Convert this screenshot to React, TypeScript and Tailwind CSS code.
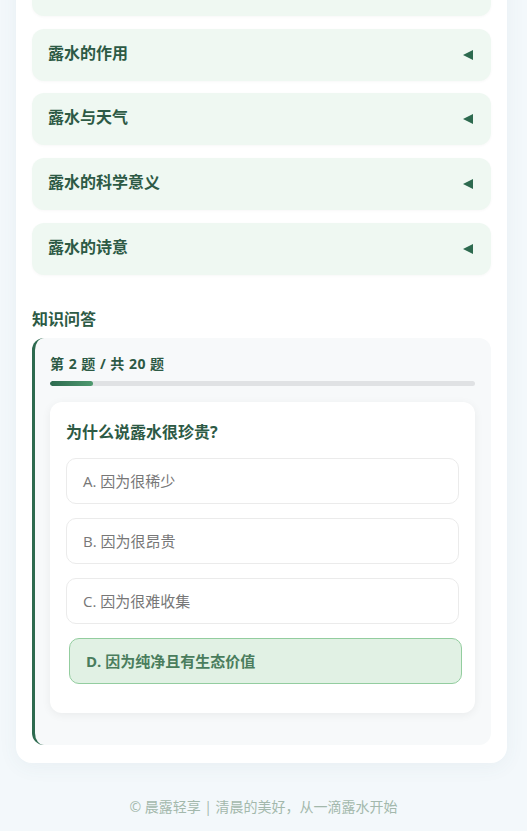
import { useState } from 'react';

const sections = ['露水的作用', '露水与天气', '露水的科学意义', '露水的诗意'];

const options = [
  { key: 'A', text: '因为很稀少' },
  { key: 'B', text: '因为很昂贵' },
  { key: 'C', text: '因为很难收集' },
  { key: 'D', text: '因为纯净且有生态价值' },
];

function Arrow() {
  return (
    <svg width="10" height="10" viewBox="0 0 10 10" className="shrink-0">
      <polygon points="10,0 10,10 0,5" fill="#2d6a4f" />
    </svg>
  );
}

export default function App() {
  const [selected, setSelected] = useState('D');

  return (
    <div
      className="min-h-screen bg-[#f3f8fb] overflow-hidden"
      style={{ fontFamily: '"Open Sans", "Noto Sans CJK SC", sans-serif' }}
    >
      <div className="ml-4 mr-5 -mt-[36px] bg-white rounded-2xl px-4 pb-[18px] shadow-[0_4px_20px_rgba(60,100,120,0.06)]">
        {/* Accordion (first item scrolled out of view) */}
        <div className="flex flex-col gap-[12.7px]">
          <div className="h-[52px] rounded-xl bg-[#eff8f2] shadow-[0_1px_3px_rgba(0,0,0,0.03)]" />
          {sections.map((title) => (
            <div
              key={title}
              className="h-[52px] rounded-xl bg-[#eff8f2] pl-4 pr-[18px] flex items-center justify-between shadow-[0_1px_3px_rgba(0,0,0,0.03)]"
            >
              <span className="text-base font-bold text-[#2d5a45] mb-[4px]">{title}</span>
              <Arrow />
            </div>
          ))}
        </div>

        {/* Quiz */}
        <h2 className="mt-8 mb-[7px] text-base leading-6 font-bold text-[#2d5a45]">知识问答</h2>
        <div className="rounded-xl border-l-[3px] border-[#2d6a4f] bg-[#f7f9fa] pl-[15px] pr-4 pt-4 pb-8">
          <div className="text-sm leading-5 font-bold tracking-[0.5px] text-[#2d5a45] mb-[7px]">第 2 题 / 共 20 题</div>
          <div className="h-[5px] rounded-full bg-[#e0e2e4] overflow-hidden">
            <div className="h-full w-[10%] rounded-full bg-gradient-to-r from-[#2d6a4f] to-[#4f9a6f]" />
          </div>

          <div className="mt-4 bg-white rounded-xl px-4 pt-[18px] pb-[29px] shadow-[0_2px_10px_rgba(0,0,0,0.06)]">
            <div className="text-base leading-6 font-bold text-[#2d5a45] mb-[14px]">为什么说露水很珍贵?</div>
            <div className="flex flex-col gap-[14px]">
              {options.map((o) => {
                const isSel = selected === o.key;
                return (
                  <button
                    key={o.key}
                    onClick={() => setSelected(o.key)}
                    className={`h-[46px] rounded-[10px] border px-4 text-left text-[15px] ${
                      isSel
                        ? 'bg-[#e1f1e4] border-[#93cd9f] text-[#4a7d5d] font-bold translate-x-[3px]'
                        : 'bg-white border-[#ebebeb] text-[#777777]'
                    }`}
                  >
                    {o.key}. {o.text}
                  </button>
                );
              })}
            </div>
          </div>
        </div>
      </div>

      <footer className="mt-[34px] pb-6 text-center text-sm leading-5 text-[#a3b8ac]">
        © 晨露轻享 | 清晨的美好，从一滴露水开始
      </footer>
    </div>
  );
}
